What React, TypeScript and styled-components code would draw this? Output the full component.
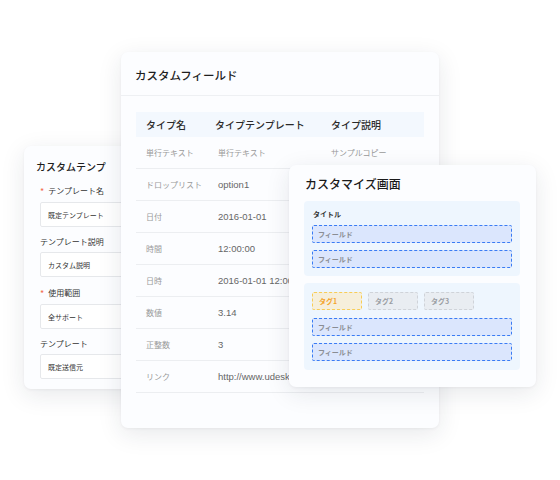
import React from "react";
import styled, { createGlobalStyle } from "styled-components";

const GlobalStyle = createGlobalStyle`
  html, body {
    margin: 0;
    padding: 0;
    background: #ffffff;
  }
  body {
    font-family: "Noto Sans CJK JP", "Noto Sans", sans-serif;
    color: #222;
  }
`;

const templateFields = [
  { label: "テンプレート名", value: "既定テンプレート", required: true },
  { label: "テンプレート説明", value: "カスタム説明", required: false },
  { label: "使用範囲", value: "全サポート", required: true },
  { label: "テンプレート", value: "既定送信元", required: false },
];

const rows = [
  { name: "単行テキスト", template: "単行テキスト", desc: "サンプルコピー", small: true },
  { name: "ドロップリスト", template: "option1" },
  { name: "日付", template: "2016-01-01" },
  { name: "時間", template: "12:00:00" },
  { name: "日時", template: "2016-01-01 12:00:00" },
  { name: "数値", template: "3.14" },
  { name: "正整数", template: "3" },
  { name: "リンク", template: "http://www.udesk.cn" },
];

const App: React.FC = () => {
  return (
    <>
      <GlobalStyle />
      <Canvas>
        <TemplateCard>
          <SmallTitle>カスタムテンプ</SmallTitle>
          <FormList>
            {templateFields.map((f) => (
              <FormGroup key={f.label}>
                <FormLabel>
                  {f.required && <Star>*</Star>}
                  {f.label}
                </FormLabel>
                <FormInput>{f.value}</FormInput>
              </FormGroup>
            ))}
          </FormList>
        </TemplateCard>

        <FieldCard>
          <CardHeader>
            <CardTitle>カスタムフィールド</CardTitle>
          </CardHeader>
          <TableWrap>
            <HeadRow>
              <span>タイプ名</span>
              <span>タイプテンプレート</span>
              <span>タイプ説明</span>
            </HeadRow>
            {rows.map((r) => (
              <BodyRow key={r.name}>
                <NameCell>{r.name}</NameCell>
                <ValueCell $small={r.small}>{r.template}</ValueCell>
                <DescCell>{r.desc ?? ""}</DescCell>
              </BodyRow>
            ))}
          </TableWrap>
        </FieldCard>

        <LayoutCard>
          <LayoutTitle>カスタマイズ画面</LayoutTitle>
          <Section>
            <SectionLabel>タイトル</SectionLabel>
            <FieldBox>フィールド</FieldBox>
            <FieldBox>フィールド</FieldBox>
          </Section>
          <Section $roomy>
            <TagRow>
              <Tag $active>タグ1</Tag>
              <Tag>タグ2</Tag>
              <Tag>タグ3</Tag>
            </TagRow>
            <FieldBox>フィールド</FieldBox>
            <FieldBox>フィールド</FieldBox>
          </Section>
        </LayoutCard>
      </Canvas>
    </>
  );
};

export default App;

const Canvas = styled.div`
  position: relative;
  width: 560px;
  height: 480px;
  overflow: hidden;
  background: #ffffff;
`;

const Window = styled.div`
  position: absolute;
  box-sizing: border-box;
  background: #fcfdff;
  border-radius: 7px;
  box-shadow: 0 6px 24px rgba(30, 40, 60, 0.1), 0 1px 3px rgba(30, 40, 60, 0.05);
  overflow: hidden;
`;

const TemplateCard = styled(Window)`
  left: 24px;
  top: 146px;
  width: 150px;
  height: 243px;
  padding: 12px 0 0 16px;
  display: flex;
  flex-direction: column;
  gap: 7px;
`;

const SmallTitle = styled.div`
  margin-left: -4px;
  font-size: 10px;
  line-height: 18px;
  font-weight: 500;
  color: #1f1f1f;
`;

const FormList = styled.div`
  display: flex;
  flex-direction: column;
  gap: 8px;
`;

const FormGroup = styled.div`
  display: flex;
  flex-direction: column;
  gap: 3px;
`;

const FormLabel = styled.div`
  font-size: 8px;
  line-height: 14px;
  color: #333;
  display: flex;
  align-items: center;
`;

const Star = styled.span`
  color: #f26b4c;
  font-size: 9px;
  margin-right: 4px;
  padding-top: 2px;
`;

const FormInput = styled.div`
  box-sizing: border-box;
  height: 25px;
  width: 140px;
  border: 1px solid #e6e8eb;
  border-radius: 2px;
  background: #ffffff;
  padding-left: 7px;
  display: flex;
  align-items: center;
  font-size: 7px;
  color: #333;
`;

const FieldCard = styled(Window)`
  left: 121px;
  top: 52px;
  width: 318px;
  height: 376px;
  display: flex;
  flex-direction: column;
`;

const CardHeader = styled.div`
  height: 44px;
  flex-shrink: 0;
  box-sizing: border-box;
  padding: 2px 14px 0;
  display: flex;
  align-items: center;
  border-bottom: 1px solid #eef0f3;
`;

const CardTitle = styled.div`
  font-size: 11.5px;
  font-weight: 500;
  color: #1f1f1f;
`;

const TableWrap = styled.div`
  padding: 16px 15px 0;
  display: flex;
  flex-direction: column;
`;

const HeadRow = styled.div`
  display: grid;
  grid-template-columns: 69px 116px 1fr;
  height: 25px;
  align-items: center;
  padding-left: 10px;
  background: #f3f8fe;
  font-size: 10px;
  font-weight: 500;
  color: #2a2a2a;
  white-space: nowrap;
`;

const BodyRow = styled.div`
  display: grid;
  grid-template-columns: 69px 116px 1fr;
  height: 32px;
  box-sizing: border-box;
  align-items: center;
  padding-left: 10px;
  border-bottom: 1px solid #eceef1;
  white-space: nowrap;
  overflow: hidden;
`;

const NameCell = styled.span`
  font-size: 8px;
  color: #9a9a9a;
`;

const ValueCell = styled.span<{ $small?: boolean }>`
  padding-left: 3px;
  font-family: ${(p) =>
    p.$small ? `"Noto Sans CJK JP", sans-serif` : `"Liberation Sans", "Noto Sans CJK JP", sans-serif`};
  font-size: ${(p) => (p.$small ? "8px" : "9.5px")};
  color: ${(p) => (p.$small ? "#9a9a9a" : "#666")};
  overflow: hidden;
`;

const DescCell = styled.span`
  font-size: 8px;
  color: #9a9a9a;
`;

const LayoutCard = styled(Window)`
  left: 289px;
  top: 165px;
  width: 247px;
  height: 222px;
  padding: 9px 16px 0 15px;
  display: flex;
  flex-direction: column;
  gap: 7px;
`;

const LayoutTitle = styled.div`
  font-size: 12px;
  line-height: 20px;
  font-weight: 500;
  color: #1a1a1a;
  padding-left: 1px;
`;

const Section = styled.div<{ $roomy?: boolean }>`
  background: #eef6fe;
  border-radius: 4px;
  padding: ${(p) => (p.$roomy ? "9px 8px" : "7px 8px 8px")};
  display: flex;
  flex-direction: column;
  gap: 7px;
`;

const SectionLabel = styled.div`
  font-size: 7px;
  line-height: 12px;
  font-weight: 600;
  color: #333;
  padding-left: 1px;
  margin-bottom: -2px;
`;

const FieldBox = styled.div`
  box-sizing: border-box;
  height: 18px;
  border: 1px dashed #3a7cf4;
  border-radius: 2px;
  background: #dbe6fd;
  padding-left: 5px;
  display: flex;
  align-items: center;
  font-size: 7px;
  font-weight: 600;
  color: #8a8d93;
`;

const TagRow = styled.div`
  display: flex;
  gap: 6px;
  margin-bottom: 1px;
`;

const Tag = styled.div<{ $active?: boolean }>`
  box-sizing: border-box;
  width: 50px;
  height: 18px;
  border-radius: 2px;
  border: 1px dashed ${(p) => (p.$active ? "#f7cd57" : "#cfd3d9")};
  background: ${(p) => (p.$active ? "#f6efdb" : "#e9edf2")};
  color: ${(p) => (p.$active ? "#f4a32a" : "#9a9da3")};
  font-size: 7px;
  font-weight: 600;
  padding-left: 6px;
  display: flex;
  align-items: center;
`;
